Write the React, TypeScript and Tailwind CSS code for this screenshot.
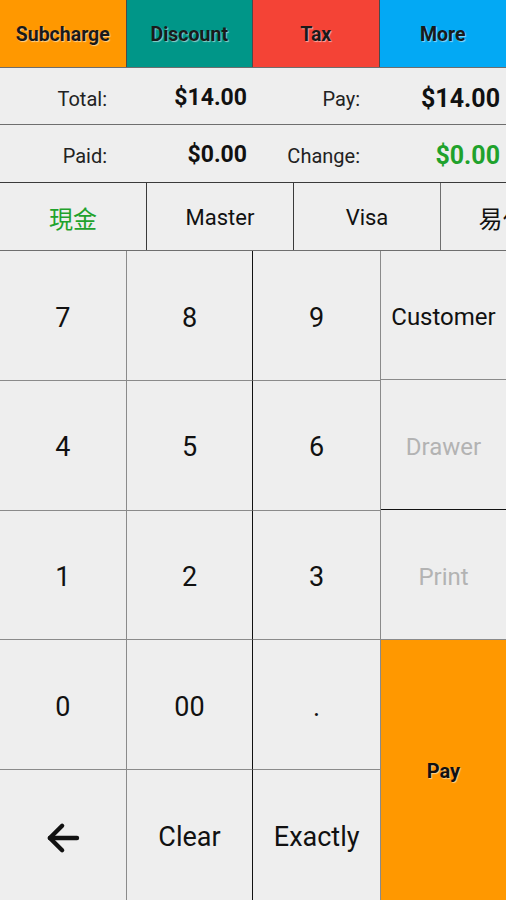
import React from "react";

const shadow = "[text-shadow:1px_1px_1px_rgba(255,255,255,0.55)]";

function Key({ children, className = "" }: { children: React.ReactNode; className?: string }) {
  return (
    <div className={`flex items-center justify-center pt-[5px] text-[27px] text-[#111] ${className}`}>{children}</div>
  );
}

export default function App() {
  const keys: React.ReactNode[] = ["7", "8", "9", "4", "5", "6", "1", "2", "3", "0", "00", ".", "back", "Clear", "Exactly"];
  return (
    <div className="w-[506px] h-[900px] overflow-hidden bg-[#eeeeee] font-['Roboto',sans-serif] flex flex-col">
      {/* Top bar */}
      <div className="grid grid-cols-4 h-[68px] shrink-0 border-b border-[#6e6e6e]">
        <div className={`bg-[#ff9800] flex items-center justify-center pt-[2px] text-[19.5px] font-bold text-[#1a1a1a] border-r border-[#4a4a4a] ${shadow}`}>Subcharge</div>
        <div className={`bg-[#009688] flex items-center justify-center pt-[2px] text-[19.5px] font-bold text-[#1a1a1a] border-r border-[#4a4a4a] ${shadow}`}>Discount</div>
        <div className={`bg-[#f44336] flex items-center justify-center pt-[2px] text-[19.5px] font-bold text-[#1a1a1a] border-r border-[#4a4a4a] ${shadow}`}>Tax</div>
        <div className={`bg-[#03a9f4] flex items-center justify-center pt-[2px] text-[19.5px] font-bold text-[#1a1a1a] ${shadow}`}>More</div>
      </div>

      {/* Total / Pay */}
      <div className="h-[57px] shrink-0 flex items-center border-b border-[#6e6e6e] pt-[5px]">
        <div className="w-[107px] text-right text-[20px] text-[#222]">Total:</div>
        <div className="w-[140px] text-right text-[23px] font-bold text-[#111]">$14.00</div>
        <div className="w-[113px] text-right text-[20px] text-[#222]">Pay:</div>
        <div className="w-[140px] text-right text-[25px] font-bold text-[#111]">$14.00</div>
      </div>

      {/* Paid / Change */}
      <div className="h-[58px] shrink-0 flex items-center border-b border-[#3a3a3a] pt-[4px]">
        <div className="w-[107px] text-right text-[20px] text-[#222]">Paid:</div>
        <div className="w-[140px] text-right text-[23px] font-bold text-[#111]">$0.00</div>
        <div className="w-[113px] text-right text-[20px] text-[#222]">Change:</div>
        <div className="w-[140px] text-right text-[25px] font-bold text-[#1fa22c]">$0.00</div>
      </div>

      {/* Payment methods */}
      <div className="h-[68px] shrink-0 flex border-b border-[#6e6e6e] overflow-hidden">
        <div className="w-[147px] shrink-0 border-r border-[#3a3a3a] flex items-center justify-center pt-[2px] text-[24px] text-[#1fa22c] font-['Noto_Sans_CJK_TC',sans-serif]">現金</div>
        <div className="w-[147px] shrink-0 border-r border-[#3a3a3a] flex items-center justify-center pt-[2px] text-[22px] text-[#111]">Master</div>
        <div className="w-[147px] shrink-0 border-r border-[#6e6e6e] flex items-center justify-center pt-[2px] text-[22px] text-[#111]">Visa</div>
        <div className="w-[147px] shrink-0 flex items-center justify-center pt-[2px] text-[24px] text-[#111] font-['Noto_Sans_CJK_TC',sans-serif]">易付卡</div>
      </div>

      {/* Keypad */}
      <div className="flex-1 flex min-h-0">
        <div className="w-[380px] grid grid-cols-3 grid-rows-5">
          {keys.map((k, i) => {
            const col = i % 3;
            const row = Math.floor(i / 3);
            const br = col === 0 ? "border-r border-r-[#8a8a8a]" : col === 1 ? "border-r border-r-[#111]" : "";
            const bb = row < 4 ? "border-b border-b-[#8a8a8a]" : "";
            const small = k === "Clear" || k === "Exactly" ? "text-[24px]" : "";
            return (
              <Key key={i} className={`${br} ${bb} ${small}`}>
                {k === "back" ? (
                  <svg width="42" height="42" viewBox="0 0 24 24" fill="none" stroke="#111" strokeWidth="2.5" strokeLinecap="round" strokeLinejoin="round">
                    <path d="M20 12H4.5" />
                    <path d="M11.5 19 4.5 12l7-7" />
                  </svg>
                ) : (
                  k
                )}
              </Key>
            );
          })}
        </div>
        <div className="w-[126px] flex flex-col border-l border-[#8a8a8a]">
          <div className="h-[129px] shrink-0 border-b border-[#8a8a8a] flex items-center justify-center pt-[4px] text-[24px] text-[#111]">Customer</div>
          <div className="h-[130px] shrink-0 border-b border-[#111] flex items-center justify-center pt-[4px] text-[24px] text-[#b3b3b3]">Drawer</div>
          <div className="h-[130px] shrink-0 border-b border-[#8a8a8a] flex items-center justify-center pt-[4px] text-[24px] text-[#b3b3b3]">Print</div>
          <div className={`flex-1 bg-[#ff9800] flex items-center justify-center pt-[2px] text-[20px] font-bold text-[#111] ${shadow}`}>Pay</div>
        </div>
      </div>
    </div>
  );
}
